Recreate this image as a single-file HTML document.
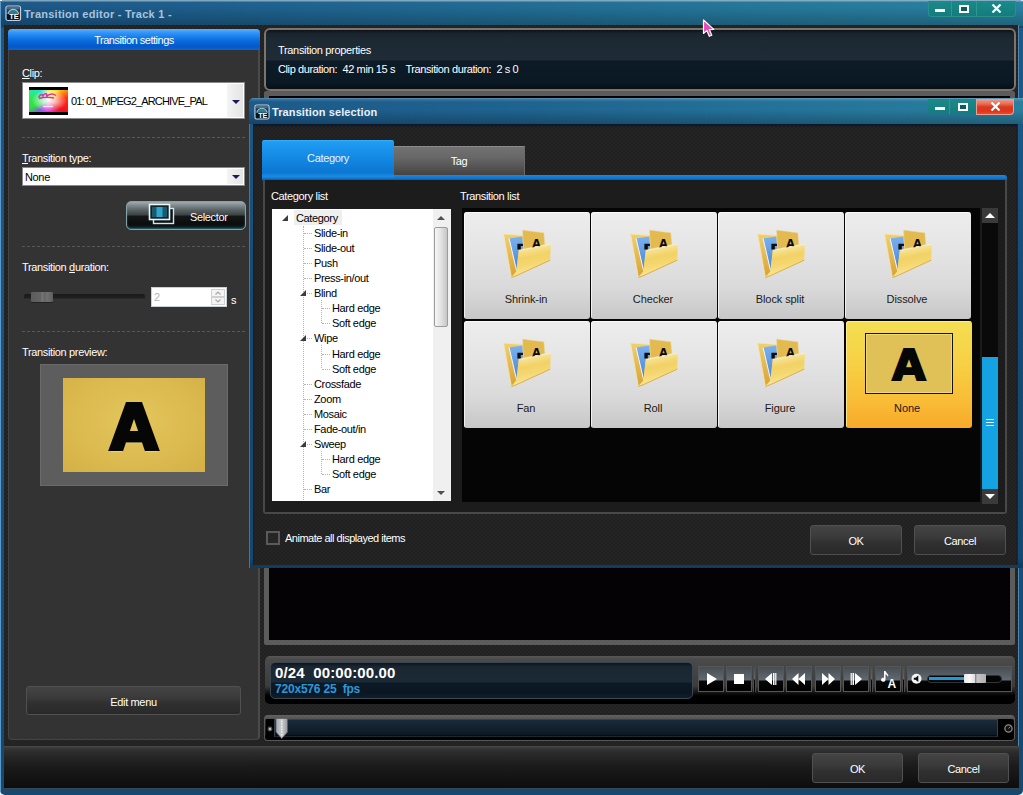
<!DOCTYPE html>
<html>
<head>
<meta charset="utf-8">
<title>Transition editor</title>
<style>
*{box-sizing:border-box;margin:0;padding:0}
html,body{width:1023px;height:795px;overflow:hidden;background:#e8eef2}
body{position:relative;font-family:"Liberation Sans","DejaVu Sans",sans-serif;font-size:11px;letter-spacing:-0.35px;color:#fff;line-height:13px}
.abs{position:absolute}
.t{position:absolute;white-space:pre}
u{text-decoration:underline}
/* main window */
#mainwin{left:0;top:0;width:1023px;height:795px;background:linear-gradient(180deg,#1c5a8a 0,#1a5482 300px,#164870 795px);border-radius:3px 3px 5px 5px}
#mtitle{left:0;top:0;width:1023px;height:26px;background:linear-gradient(90deg,#1b5686 0%,#1d5e8b 22%,#206a91 48%,#247698 75%,#287f9e 100%)}
#mtitle .sh{left:0;top:0;width:1023px;height:28px;background:linear-gradient(180deg,rgba(150,185,205,.8) 0,rgba(150,185,205,.8) 1px,rgba(255,255,255,.02) 2px,rgba(0,0,0,0) 8px,rgba(0,0,0,.22) 25px)}
.ttl{font-weight:bold;font-size:11px;letter-spacing:0.25px;color:#a9c3dc}
#client{left:4px;top:25px;width:1015px;height:722px;background:conic-gradient(#262626 25%,#212121 0 50%,#262626 0 75%,#212121 0) 0 0/4px 4px;border-right:1px solid #4f86b0}
#bottombar{left:4px;top:746px;width:1015px;height:43px;border-bottom:1px solid #3a4650;background:linear-gradient(180deg,#4a4a4a 0,#383838 2px,#2c2c2c 6px,#1c1c1c 45%,#0d0d0d 100%)}
.btn{position:absolute;height:30px;border:1px solid #505050;border-radius:3px;background:linear-gradient(180deg,#444 0,#3a3a3a 40%,#303030 60%,#292929 100%);text-align:center;line-height:30px;color:#fff}
/* left panel */
#lp{left:8px;top:29px;width:252px;height:711px;background:#333;border:1px solid #454545;border-right:2px solid #4a4a4a;border-radius:4px}
#lphead{left:8px;top:29px;width:252px;height:21px;border-radius:4px 4px 0 0;background:linear-gradient(180deg,#5ab0ff 0,#2f93f7 4px,#0b6fe0 11px,#0558c8 17px,#0b63d2 21px);text-align:center;line-height:23px}
.dash{position:absolute;height:0;border-top:1px dashed #585858}
.combo{position:absolute;background:#fff;border:1px solid #8a8a8a;color:#000}
.arrow{position:absolute;width:0;height:0;border-left:4px solid transparent;border-right:4px solid transparent;border-top:4px solid #1a1a5a}

/* right side */
#props{left:264px;top:28px;width:752px;height:63px;border:2px solid #7d746b;border-radius:6px;background:linear-gradient(180deg,#0c1218 0,#18222b 3px,#1d2932 8px,#1f2b35 30px,#0d1b27 31px,#0b1924 52px,#070f16 59px)}
#pv{left:264px;top:91px;width:751px;height:554px;background:#040204;border:5px solid #5c5c5c;border-radius:2px}
#player{left:265px;top:656px;width:750px;height:48px;border-radius:5px;background:linear-gradient(180deg,#585858 0,#4a4a4a 3px,#3c3c3c 30px,#111 37px,#000 40px)}
#disp{left:270px;top:662px;width:423px;height:37px;border:1px solid #3a4650;border-radius:5px;background:linear-gradient(180deg,#0d141b 0,#1a2732 4px,#1c2a36 19px,#0c1a27 20px,#0a1722 30px,#13222f 37px)}
.pb{position:absolute;top:666px;width:26px;height:26px;border:1px solid #565656;background:linear-gradient(180deg,#464c52 0,#626a71 13px,#070707 14px,#000 100%)}
.pbs{width:3px;border-width:0 1px;border-color:#4c4c4c}
.pb svg{position:absolute;left:0;top:0}
#seek{left:264px;top:715px;width:751px;height:26px;border-radius:4px;border:1px solid #585858;border-top:0;background:linear-gradient(180deg,#626262 0,#525252 4px,#1b2b3a 5px,#0c1824 20px,#000 21px,#000 26px)}

/* dialog */
#dlg{left:249px;top:98px;width:774px;height:470px;background:linear-gradient(180deg,#1c5a8a 0,#1a5482 60px,#164a74 200px,#154870 460px,#123c5e 467px,#123c5e 470px);border-radius:5px 0 0 0;border-left:1px solid #3a78a8}
#dtitle{left:249px;top:98px;width:774px;height:26px;border-radius:5px 0 0 0;background:linear-gradient(90deg,#1c5a8a 0%,#1f638f 35%,#24739a 70%,#2a7f9e 100%)}
#dtitle .sh{left:0;top:0;width:774px;height:26px;border-radius:5px 0 0 0;background:linear-gradient(180deg,rgba(150,190,215,.6) 0,rgba(150,190,215,.25) 1px,rgba(255,255,255,0) 4px,rgba(0,0,0,0) 12px,rgba(0,0,0,.25) 26px)}
#dbody{left:253px;top:124px;width:765px;height:441px;background:conic-gradient(#252525 25%,#202020 0 50%,#252525 0 75%,#202020 0) 0 0/4px 4px;border-right:1px solid #0d2a44;box-shadow:inset 0 2px 2px rgba(8,24,44,.85)}
#tabC{left:262px;top:140px;width:132px;height:38px;border-radius:2px 2px 0 0;color:#e4f4ff;background:linear-gradient(180deg,#38b0fc 0,#1f9cf2 2px,#1890ea 12px,#1084de 22px,#0c76d0 33px,#178ce6 36px,#1480d8 38px);text-align:center;line-height:36px}
#tabT{left:394px;top:146px;width:131px;height:29px;border-top:1px solid #8a8a8a;border-right:1px solid #6a6a6a;background:linear-gradient(180deg,#727272 0,#666 40%,#525252 75%,#484040 100%);text-align:center;line-height:28px}
#tabline{left:262px;top:175px;width:745px;height:6px;border-radius:2px 3px 0 0;background:linear-gradient(180deg,#1a8ae4 0,#106ec6 4px,#143a5c 6px)}
#inner{left:263px;top:180px;width:744px;height:334px;background:#1c1c1c;border:2px solid #484848;border-top:0;border-radius:0 0 3px 3px}
#tree{left:272px;top:209px;width:178.500px;height:292px;background:#fff;overflow:hidden;color:#000}
#tree .i{position:absolute;white-space:pre;line-height:13px;margin-top:1px}
#tree .h{position:absolute;height:0;border-top:1px dotted #b4b4b4}
#tree .v{position:absolute;width:0;border-left:1px dotted #b4b4b4}
#tree .a{position:absolute;width:0;height:0;border-left:6px solid transparent;border-bottom:6px solid #3c3c3c}
#list{left:462px;top:208px;width:518px;height:294px;background:#050505}
.tile{position:absolute;width:126px;height:107px;border-radius:3px;background:linear-gradient(180deg,#ededed 0,#e6e6e6 30%,#dadada 70%,#c7c7c7 100%);box-shadow:inset 1px 1px 0 rgba(255,255,255,.7);color:#1a1a1a;text-align:center}
.tile .lb{position:absolute;left:0;width:124px;top:81px;text-align:center;letter-spacing:-0.1px}
.tile svg{position:absolute;left:39px;top:17px}
.tile.sel{background:linear-gradient(180deg,#f4de52 0,#f7d044 40%,#f9bc36 75%,#f8a92a 100%);box-shadow:inset 1px 1px 0 rgba(255,240,160,.8)}
#vsb{left:982px;top:208px;width:16px;height:296px;background:#0a0a0a}
.sbb{position:absolute;left:0;width:16px;height:15px;background:#3a3a3a}
.cbx{position:absolute;width:14px;height:14px;border:2px solid #5a5a5a;background:#262626}
.wc{position:absolute;background:#16807f}

.gold{position:absolute;background:radial-gradient(ellipse at 50% 45%,#e3c65c 0,#dcbb50 55%,#d4b046 100%)}
.bigA{position:absolute;text-align:center;font-family:"DejaVu Sans","Liberation Sans",sans-serif;font-weight:bold;color:#060606;letter-spacing:0}
.ddb{position:absolute;background:linear-gradient(90deg,#f4f4f4,#e4e4e4)}
</style>
</head>
<body>
<div id="mainwin" class="abs">
  <div id="mtitle" class="abs"><div class="sh abs"></div></div>
  <div class="abs" style="left:0;top:2px;width:1px;height:790px;background:#5f98c4"></div>
  <div class="abs" style="left:0;top:0;width:2px;height:1px;background:#e8eef2"></div>
  <div class="abs" style="left:1021px;top:0;width:2px;height:1px;background:#d8e0e4"></div>
  <div id="client" class="abs"></div>
  <div id="bottombar" class="abs"></div>
  <div class="t ttl" style="left:24px;top:8px">Transition editor - Track 1 -</div>

  <!-- window controls -->
  <div class="wc" style="left:928px;top:1px;width:88px;height:16px;border-radius:0 0 4px 4px;background:linear-gradient(180deg,#1b8a88,#147c7e);border:1px solid #2a908c;border-top:0"></div>
  <div class="abs" style="left:951px;top:1px;width:1px;height:15px;background:#2f9792"></div>
  <div class="abs" style="left:976px;top:1px;width:1px;height:15px;background:#2f9792"></div>
  <div class="abs" style="left:935px;top:9px;width:10px;height:3px;background:#fff"></div>
  <div class="abs" style="left:959px;top:5px;width:10px;height:8px;border:2px solid #fff;background:#0f5c60"></div>
  <svg class="abs" style="left:991px;top:4px" width="11" height="9" viewBox="0 0 11 9"><path d="M1.500 0.500 L9.500 8.500 M9.500 0.500 L1.500 8.500" stroke="#fff" stroke-width="2.200"/></svg>
  <svg class="abs" style="left:5px;top:5px" width="16.5" height="16.5" viewBox="0 0 17 17"><rect x="1" y="1" width="15" height="15" rx="2" fill="#1f3850" stroke="#bdd1e4" stroke-width="1.2"/><rect x="2" y="2" width="13" height="2.500" fill="#4a6c86"/><path d="M3 10 A5.500 5.500 0 0 1 14 10 Z" fill="#2a7c8c" stroke="#a8c8dc" stroke-width="1.1"/><rect x="2" y="9.300" width="13" height="5.700" fill="#06121e"/><text x="9.200" y="14.500" text-anchor="middle" font-family="Liberation Sans, sans-serif" font-weight="bold" font-size="7.800" fill="#fff" letter-spacing="-0.2">TE</text></svg>
  <svg class="abs" style="left:702px;top:19px;z-index:5" width="16" height="20" viewBox="0 0 16 20"><path d="M1.500 1 L1.500 14.500 L4.800 11.600 L7.300 17.300 L9.800 16.200 L7.300 10.600 L11.800 10.400 Z" fill="#e84ab8" stroke="#fff" stroke-width="1.2" stroke-linejoin="round"/></svg>
  <!-- left panel -->
  <div id="lp" class="abs"></div>
  <div id="lphead" class="abs" style="letter-spacing:-0.49px">Transition settings</div>
  <div class="t" style="left:22px;top:67px"><u>C</u>lip:</div>
  <div class="combo" style="left:22px;top:82px;width:223px;height:37px"></div>
  <div class="t" style="left:71px;top:95px;color:#000;letter-spacing:-0.85px">01: 01_MPEG2_ARCHIVE_PAL</div>
  <div class="abs" style="left:29px;top:87px;width:39px;height:28px;background:#000"></div>
  <div class="abs" style="left:29px;top:90px;width:39px;height:22px;background:radial-gradient(ellipse 45% 50% at 52% 48%,rgba(255,255,255,.95) 0,rgba(255,255,255,.7) 35%,rgba(255,255,255,0) 100%),conic-gradient(from 0deg at 50% 50%,#f8f060 0deg,#ffe020 40deg,#ff3010 80deg,#f01020 125deg,#f030c0 165deg,#e040f0 195deg,#8060e0 225deg,#30e040 250deg,#30e860 285deg,#20e8d8 320deg,#a0f0a0 345deg,#f8f060 360deg)"></div>
  <svg class="abs" style="left:29px;top:87px" width="39" height="29" viewBox="0 0 39 29"><path d="M9.500 10.500 C11.500 6.500 14 7 13.500 9.500 C15.500 5.500 19 6 17.500 9.500 C20 7 23.500 6 27 8.500 M10 11.500 C15 10 20 10 25 11" stroke="#e0309a" stroke-width="1.5" fill="none"/><path d="M14 19.500h10" stroke="#fbe4f4" stroke-width="1.2"/></svg>
  <div class="ddb" style="left:227px;top:84px;width:16px;height:33px"></div>
  <div class="arrow" style="left:232px;top:100px"></div>
  <div class="dash" style="left:22px;top:137px;width:223px"></div>
  <div class="t" style="left:22px;top:152px"><u>T</u>ransition type:</div>
  <div class="combo" style="left:22px;top:167px;width:223px;height:19px"></div>
  <div class="t" style="left:25px;top:171px;color:#000">None</div>
  <div class="ddb" style="left:227px;top:169px;width:16px;height:15px"></div>
  <div class="arrow" style="left:232px;top:175px"></div>
  <div class="dash" style="left:22px;top:246px;width:223px"></div>
  <div class="t" style="left:22px;top:261px">Transition <u>d</u>uration:</div>
  <div class="dash" style="left:22px;top:331px;width:223px"></div>
  <div class="t" style="left:22px;top:346px">Transition preview:</div>
  <!-- selector button -->
  <div class="abs" style="left:126px;top:201px;width:120px;height:29px;border:1px solid #86a2a8;border-radius:5px;background:linear-gradient(180deg,#a2acae 0,#848e90 3px,#5a6264 8px,#3c4244 13px,#151717 14px,#0c0c0c 22px,#10282e 29px);box-shadow:inset 0 -1px 2px rgba(60,170,190,.55)"></div>
  <svg class="abs" style="left:146px;top:202px" width="32" height="26" viewBox="0 0 32 26"><rect x="7.500" y="6.500" width="20" height="15" fill="#0a1418" stroke="#cfe6ea" stroke-width="1.4"/><rect x="3.500" y="2.500" width="20" height="15" fill="#10222a" stroke="#e8f6f8" stroke-width="1.6"/><rect x="6" y="5" width="15" height="10" fill="#1a5a6e"/><rect x="10.500" y="5" width="6" height="10" fill="#2fa4cc"/></svg>
  <div class="t" style="left:190px;top:211px">Selector</div>
  <!-- slider -->
  <div class="abs" style="left:24px;top:294px;width:121px;height:6px;border-radius:2px;background:linear-gradient(180deg,#1a1a1a,#202020 65%,#3c3c3c 100%)"></div>
  <div class="abs" style="left:31px;top:292px;width:22px;height:10px;border-radius:1px;background:linear-gradient(90deg,#5c5c5c 0,#646464 45%,#787878 50%,#666 60%,#707070 75%,#5e5e5e 100%);box-shadow:0 1px 0 #222"></div>
  <div class="abs" style="left:151px;top:287px;width:76px;height:20px;background:#fff;border:1px solid #c8d0d8"></div>
  <div class="t" style="left:154px;top:291px;color:#b4b4b4">2</div>
  <div class="abs" style="left:211px;top:289px;width:14px;height:8px;border:1px solid #d0d0d0;background:#f4f4f4"></div>
  <div class="abs" style="left:211px;top:297px;width:14px;height:8px;border:1px solid #d0d0d0;background:#f4f4f4"></div>
  <svg class="abs" style="left:211px;top:289px" width="14" height="16" viewBox="0 0 14 16"><path d="M4.500 5.500 L7 3 L9.500 5.500 M4.500 10.500 L7 13 L9.500 10.500" stroke="#a8a8a8" stroke-width="1.2" fill="none"/></svg>
  <div class="t" style="left:231px;top:294px">s</div>
  <!-- preview -->
  <div class="abs" style="left:40px;top:364px;width:188px;height:122px;background:#5d5d5d;border:1px solid #6a6a6a"></div>
  <div class="gold" style="left:63px;top:378px;width:142px;height:94px"></div>
  <div class="bigA" style="left:63px;top:378px;width:142px;height:94px;font-size:62px;line-height:100px;-webkit-text-stroke:3px #060606;text-shadow:0 2px 1px rgba(255,240,170,.8)">A</div>
  <div class="btn" style="left:26px;top:686px;width:215px;height:29px">Edit menu</div>


  <!-- right side -->
  <div id="props" class="abs"></div>
  <div class="t" style="left:278px;top:44px;letter-spacing:-0.33px">Transition properties</div>
  <div class="t" style="left:278px;top:63px;letter-spacing:-0.4px">Clip duration:  42 min 15 s    Transition duration:  2 s 0</div>
  <div id="pv" class="abs"></div>
  <div id="player" class="abs"></div>
  <div id="disp" class="abs"></div>
  <div class="t" style="left:275px;top:664px;font-size:15px;font-weight:bold;letter-spacing:0.12px;line-height:17px">0/24  00:00:00.00</div>
  <div class="t" style="left:275px;top:682px;font-size:12px;font-weight:bold;letter-spacing:-0.2px;line-height:14px;color:#2b98dc">720x576 25  fps</div>
  <div class="pb" style="left:698px"><svg width="24" height="24" viewBox="0 0 24 24"><path d="M8 6 L18 12 L8 18 Z" fill="#fff"/></svg></div>
  <div class="pb" style="left:726px"><svg width="24" height="24" viewBox="0 0 24 24"><rect x="7" y="7" width="10" height="10" fill="#fff"/></svg></div>
  <div class="pb" style="left:758px"><svg width="24" height="24" viewBox="0 0 24 24"><path d="M13 6 L13 18 L6 12 Z M14 6h1.5v12H14z M16.2 6h1.2v12h-1.2z" fill="#fff"/></svg></div>
  <div class="pb" style="left:786px"><svg width="24" height="24" viewBox="0 0 24 24"><path d="M11.5 6 L11.5 18 L5 12 Z M18 6 L18 18 L11.5 12 Z" fill="#fff"/></svg></div>
  <div class="pb" style="left:815px"><svg width="24" height="24" viewBox="0 0 24 24"><path d="M6 6 L12.5 12 L6 18 Z M12.5 6 L19 12 L12.5 18 Z" fill="#fff"/></svg></div>
  <div class="pb" style="left:843px"><svg width="24" height="24" viewBox="0 0 24 24"><path d="M11 6 L18 12 L11 18 Z M8.5 6h1.5v12H8.500z M6.600 6h1.2v12h-1.2z" fill="#fff"/></svg></div>
  <div class="pb" style="left:875px"><svg width="24" height="24" viewBox="0 0 24 24"><path d="M8 4 L9.5 4 C10 6 12 6.500 12.5 9 L11.5 9.5 C11 8 10 7.500 9.500 7.300 L9.500 12.500 A2.200 2 0 1 1 8 10.800 Z" fill="#fff"/><text x="11.5" y="21" font-family="Liberation Sans, sans-serif" font-weight="bold" font-size="12" fill="#fff" letter-spacing="0">A</text></svg></div>
  <div class="pb pbs" style="left:753px"></div>
  <div class="pb pbs" style="left:870px"></div>
  <div class="pb pbs" style="left:902px"></div>
  <div class="pb" style="left:907px;width:105px"></div>
  <svg class="abs" style="left:910px;top:672px" width="14" height="14" viewBox="0 0 14 14"><circle cx="6.500" cy="6.800" r="5" fill="#f4f4f4"/><path d="M3.800 5.800 h1.700 l2.800 -2.300 v6.600 l-2.800 -2.300 h-1.700z" fill="#0a0a0a"/></svg>
  <div class="abs" style="left:927px;top:675px;width:75px;height:8px;border-radius:4px;background:#050505;border:1px solid #303436"></div>
  <div class="abs" style="left:929px;top:677px;width:38px;height:3px;background:#1e9ada"></div>
  <div class="abs" style="left:964px;top:674px;width:22px;height:9px;border-radius:1px;background:linear-gradient(90deg,#e8e8e8 0,#fafafa 25%,#e0e0e0 48%,#8a8a8a 52%,#c4c4c4 60%,#b0b0b0 100%)"></div>
  <div id="seek" class="abs"></div>
  <div class="abs" style="left:266px;top:719px;width:8px;height:18px;background:#000"></div>
  <div class="abs" style="left:998px;top:719px;width:16px;height:18px;background:#000;border-radius:0 3px 3px 0"></div>
  <div class="abs" style="left:274px;top:719px;width:724px;height:18px;border:1px solid #33424f;border-bottom-color:#1d2830"></div>
  <svg class="abs" style="left:1003px;top:723px" width="11" height="11" viewBox="0 0 11 11"><circle cx="5.500" cy="5.500" r="3.600" fill="#111" stroke="#8a8a8a" stroke-width="1.3"/><path d="M5.500 5.500 L7.500 3.500" stroke="#8a8a8a" stroke-width="1"/></svg>
  <svg class="abs" style="left:266px;top:724px" width="8" height="9" viewBox="0 0 8 9"><circle cx="4" cy="5" r="1.800" fill="#bbb" stroke="#555" stroke-width="1.2"/></svg>
  <svg class="abs" style="left:274.500px;top:717.500px" width="13.500" height="21.500" viewBox="0 0 14 23" preserveAspectRatio="none"><defs><linearGradient id="skt" x1="0" y1="0" x2="1" y2="0"><stop offset="0" stop-color="#a4a6a8"/><stop offset="0.5" stop-color="#cbcdcf"/><stop offset="1" stop-color="#96989a"/></linearGradient></defs><path d="M1 1.500 Q1 0.500 2 0.500 L12 0.500 Q13 0.500 13 1.500 L13 15 L7 22 L1 15 Z" fill="url(#skt)" stroke="#5a5e62" stroke-width="0.8"/><path d="M7 3 V19" stroke="#f0f0f0" stroke-width="1.6" stroke-dasharray="1.5 1.3"/></svg>
  <!-- bottom buttons -->
  <div class="btn" style="left:812px;top:753px;width:91px">OK</div>
  <div class="btn" style="left:918px;top:753px;width:91px">Cancel</div>

  <!-- dialog -->
  <div id="dlg" class="abs"></div>
  <div id="dtitle" class="abs"><div class="sh abs"></div></div>
  <div id="dbody" class="abs"></div>
  <div class="t ttl" style="left:272px;top:106px;color:#e8f0f8;letter-spacing:0.1px">Transition selection</div>
  <div class="wc" style="left:928px;top:99px;width:48px;height:15px;border-radius:0 0 0 4px;background:linear-gradient(180deg,#1b8a88,#147c7e)"></div>
  <div class="abs" style="left:976px;top:99px;width:38px;height:16px;border-radius:0 0 4px 0;border:1px solid #e8a090;border-top:0;background:linear-gradient(180deg,#f0a090 0,#e86a50 5px,#d83a20 8px,#e0341c 12px,#f05030 16px)"></div>
  <div class="abs" style="left:949px;top:99px;width:1px;height:15px;background:#2f9792"></div>
  <div class="abs" style="left:935px;top:107px;width:10px;height:3px;background:#fff"></div>
  <div class="abs" style="left:958px;top:103px;width:10px;height:8px;border:2px solid #fff;background:#0f5c60"></div>
  <svg class="abs" style="left:990px;top:102px" width="11" height="9" viewBox="0 0 11 9"><path d="M1.500 0.500 L9.500 8.500 M9.500 0.500 L1.500 8.500" stroke="#fff" stroke-width="2.200"/></svg>
  <svg class="abs" style="left:254px;top:103.500px" width="16" height="16" viewBox="0 0 17 17"><rect x="1" y="1" width="15" height="15" rx="2" fill="#1f3850" stroke="#bdd1e4" stroke-width="1.2"/><rect x="2" y="2" width="13" height="2.500" fill="#4a6c86"/><path d="M3 10 A5.500 5.500 0 0 1 14 10 Z" fill="#2a7c8c" stroke="#a8c8dc" stroke-width="1.1"/><rect x="2" y="9.300" width="13" height="5.700" fill="#06121e"/><text x="9.200" y="14.500" text-anchor="middle" font-family="Liberation Sans, sans-serif" font-weight="bold" font-size="7.800" fill="#fff" letter-spacing="-0.2">TE</text></svg>
  <div id="tabT" class="abs">Tag</div>
  <div id="tabline" class="abs"></div>
  <div id="inner" class="abs"></div>
  <div id="tabC" class="abs">Category</div>
  <div class="t" style="left:271px;top:190px">Category list</div>
  <div class="t" style="left:460px;top:190px">Transition list</div>
  <div id="tree" class="abs"><div class="abs" style="left:22px;top:1px;width:48px;height:15px;background:#efefef"></div><div class="v" style="left:31px;top:17px;height:280px"></div><div class="i" style="left:24px;top:2px">Category</div><div class="a" style="left:10px;top:6px"></div><div class="i" style="left:42px;top:17px">Slide-in</div><div class="h" style="left:32px;top:24px;width:8px"></div><div class="i" style="left:42px;top:32px">Slide-out</div><div class="h" style="left:32px;top:39px;width:8px"></div><div class="i" style="left:42px;top:47px">Push</div><div class="h" style="left:32px;top:54px;width:8px"></div><div class="i" style="left:42px;top:62px">Press-in/out</div><div class="h" style="left:32px;top:69px;width:8px"></div><div class="i" style="left:42px;top:77px">Blind</div><div class="h" style="left:32px;top:84px;width:8px"></div><div class="a" style="left:28px;top:81px"></div><div class="i" style="left:60px;top:92px">Hard edge</div><div class="h" style="left:50px;top:99px;width:8px"></div><div class="i" style="left:60px;top:107px">Soft edge</div><div class="h" style="left:50px;top:114px;width:8px"></div><div class="i" style="left:42px;top:122px">Wipe</div><div class="h" style="left:32px;top:129px;width:8px"></div><div class="a" style="left:28px;top:126px"></div><div class="i" style="left:60px;top:138px">Hard edge</div><div class="h" style="left:50px;top:145px;width:8px"></div><div class="i" style="left:60px;top:153px">Soft edge</div><div class="h" style="left:50px;top:160px;width:8px"></div><div class="i" style="left:42px;top:168px">Crossfade</div><div class="h" style="left:32px;top:175px;width:8px"></div><div class="i" style="left:42px;top:183px">Zoom</div><div class="h" style="left:32px;top:190px;width:8px"></div><div class="i" style="left:42px;top:198px">Mosaic</div><div class="h" style="left:32px;top:205px;width:8px"></div><div class="i" style="left:42px;top:213px">Fade-out/in</div><div class="h" style="left:32px;top:220px;width:8px"></div><div class="i" style="left:42px;top:228px">Sweep</div><div class="h" style="left:32px;top:235px;width:8px"></div><div class="a" style="left:28px;top:232px"></div><div class="i" style="left:60px;top:243px">Hard edge</div><div class="h" style="left:50px;top:250px;width:8px"></div><div class="i" style="left:60px;top:258px">Soft edge</div><div class="h" style="left:50px;top:265px;width:8px"></div><div class="i" style="left:42px;top:273px">Bar</div><div class="h" style="left:32px;top:280px;width:8px"></div><div class="v" style="left:49px;top:91px;height:23px"></div><div class="v" style="left:49px;top:136px;height:23px"></div><div class="v" style="left:49px;top:242px;height:23px"></div><div class="abs" style="left:161px;top:0;width:18px;height:292px;background:#f0f0f0"></div><div class="abs" style="left:162px;top:18px;width:14px;height:100px;border:1px solid #9c9c9c;border-radius:2px;background:linear-gradient(90deg,#f6f6f6 0,#e2e2e2 50%,#c6c6c6 100%)"></div><div class="abs" style="left:165px;top:7px;width:0;height:0;border-left:4px solid transparent;border-right:4px solid transparent;border-bottom:4px solid #505050"></div><div class="abs" style="left:165px;top:282px;width:0;height:0;border-left:4px solid transparent;border-right:4px solid transparent;border-top:4px solid #505050"></div></div>
  <div id="list" class="abs">
<div class="tile" style="left:2px;top:4px"><svg width="50" height="50" viewBox="0 0 50 50"><defs><linearGradient id="fgF0" x1="0.2" y1="0" x2="0.45" y2="1"><stop offset="0" stop-color="#fdf0b8"/><stop offset="0.42" stop-color="#f2d266"/><stop offset="0.62" stop-color="#f4d770"/><stop offset="0.85" stop-color="#f9e391"/><stop offset="1" stop-color="#e6bb4e"/></linearGradient><linearGradient id="fgB0" x1="0" y1="0" x2="0" y2="1"><stop offset="0" stop-color="#efd070"/><stop offset="1" stop-color="#d8a233"/></linearGradient><linearGradient id="fgU0" x1="0" y1="0" x2="0" y2="1"><stop offset="0" stop-color="#7ab2f2"/><stop offset="1" stop-color="#4784d2"/></linearGradient></defs><path d="M0.600 5.100 L20 6.500 L20 23 L13.500 43 L8.400 48.400 Z" fill="url(#fgB0)" stroke="#f6e6a8" stroke-width="0.8"/><path d="M6.100 9.400 L19.400 7.400 L20.100 19.500 L15.800 21.100 L13.500 41.400 Z" fill="url(#fgU0)"/><path d="M6.100 9.400 L13.500 41.400" stroke="#f4f8fd" stroke-width="1"/><path d="M14.400 14.800 h5.600 v2.200 h-2.200 v3.400 h-3.400z" fill="#0c0c0c"/><path d="M19.700 1.200 L40.800 3.900 L41.700 15.600 L20.500 19.900 Z" fill="#e3ba4f" stroke="#edcf7c" stroke-width="0.5"/><text x="33.300" y="18.600" text-anchor="middle" font-family="DejaVu Sans, Liberation Sans, sans-serif" font-weight="bold" font-size="11.5" fill="#0a0a0a">A</text><path d="M15.800 21.500 L47.800 15.200 L47.200 31.200 L13.100 46.800 L8.400 48.500 L13.100 42.900 Z" fill="url(#fgF0)"/><path d="M47.200 31.200 L13.100 46.800 L8.400 48.500" stroke="#d9a83e" stroke-width="0.9" fill="none"/><path d="M15.800 21.500 L47.800 15.200" stroke="#fdf4cc" stroke-width="0.7" fill="none"/></svg><div class="lb">Shrink-in</div></div>
<div class="tile" style="left:129px;top:4px"><svg width="50" height="50" viewBox="0 0 50 50"><defs><linearGradient id="fgF1" x1="0.2" y1="0" x2="0.45" y2="1"><stop offset="0" stop-color="#fdf0b8"/><stop offset="0.42" stop-color="#f2d266"/><stop offset="0.62" stop-color="#f4d770"/><stop offset="0.85" stop-color="#f9e391"/><stop offset="1" stop-color="#e6bb4e"/></linearGradient><linearGradient id="fgB1" x1="0" y1="0" x2="0" y2="1"><stop offset="0" stop-color="#efd070"/><stop offset="1" stop-color="#d8a233"/></linearGradient><linearGradient id="fgU1" x1="0" y1="0" x2="0" y2="1"><stop offset="0" stop-color="#7ab2f2"/><stop offset="1" stop-color="#4784d2"/></linearGradient></defs><path d="M0.600 5.100 L20 6.500 L20 23 L13.500 43 L8.400 48.400 Z" fill="url(#fgB1)" stroke="#f6e6a8" stroke-width="0.8"/><path d="M6.100 9.400 L19.400 7.400 L20.100 19.500 L15.800 21.100 L13.500 41.400 Z" fill="url(#fgU1)"/><path d="M6.100 9.400 L13.500 41.400" stroke="#f4f8fd" stroke-width="1"/><path d="M14.400 14.800 h5.600 v2.200 h-2.200 v3.400 h-3.400z" fill="#0c0c0c"/><path d="M19.700 1.200 L40.800 3.900 L41.700 15.600 L20.500 19.900 Z" fill="#e3ba4f" stroke="#edcf7c" stroke-width="0.5"/><text x="33.300" y="18.600" text-anchor="middle" font-family="DejaVu Sans, Liberation Sans, sans-serif" font-weight="bold" font-size="11.5" fill="#0a0a0a">A</text><path d="M15.800 21.500 L47.800 15.200 L47.200 31.200 L13.100 46.800 L8.400 48.500 L13.100 42.900 Z" fill="url(#fgF1)"/><path d="M47.200 31.200 L13.100 46.800 L8.400 48.500" stroke="#d9a83e" stroke-width="0.9" fill="none"/><path d="M15.800 21.500 L47.800 15.200" stroke="#fdf4cc" stroke-width="0.7" fill="none"/></svg><div class="lb">Checker</div></div>
<div class="tile" style="left:256px;top:4px"><svg width="50" height="50" viewBox="0 0 50 50"><defs><linearGradient id="fgF2" x1="0.2" y1="0" x2="0.45" y2="1"><stop offset="0" stop-color="#fdf0b8"/><stop offset="0.42" stop-color="#f2d266"/><stop offset="0.62" stop-color="#f4d770"/><stop offset="0.85" stop-color="#f9e391"/><stop offset="1" stop-color="#e6bb4e"/></linearGradient><linearGradient id="fgB2" x1="0" y1="0" x2="0" y2="1"><stop offset="0" stop-color="#efd070"/><stop offset="1" stop-color="#d8a233"/></linearGradient><linearGradient id="fgU2" x1="0" y1="0" x2="0" y2="1"><stop offset="0" stop-color="#7ab2f2"/><stop offset="1" stop-color="#4784d2"/></linearGradient></defs><path d="M0.600 5.100 L20 6.500 L20 23 L13.500 43 L8.400 48.400 Z" fill="url(#fgB2)" stroke="#f6e6a8" stroke-width="0.8"/><path d="M6.100 9.400 L19.400 7.400 L20.100 19.500 L15.800 21.100 L13.500 41.400 Z" fill="url(#fgU2)"/><path d="M6.100 9.400 L13.500 41.400" stroke="#f4f8fd" stroke-width="1"/><path d="M14.400 14.800 h5.600 v2.200 h-2.200 v3.400 h-3.400z" fill="#0c0c0c"/><path d="M19.700 1.200 L40.800 3.900 L41.700 15.600 L20.500 19.900 Z" fill="#e3ba4f" stroke="#edcf7c" stroke-width="0.5"/><text x="33.300" y="18.600" text-anchor="middle" font-family="DejaVu Sans, Liberation Sans, sans-serif" font-weight="bold" font-size="11.5" fill="#0a0a0a">A</text><path d="M15.800 21.500 L47.800 15.200 L47.200 31.200 L13.100 46.800 L8.400 48.500 L13.100 42.900 Z" fill="url(#fgF2)"/><path d="M47.200 31.200 L13.100 46.800 L8.400 48.500" stroke="#d9a83e" stroke-width="0.9" fill="none"/><path d="M15.800 21.500 L47.800 15.200" stroke="#fdf4cc" stroke-width="0.7" fill="none"/></svg><div class="lb">Block split</div></div>
<div class="tile" style="left:383px;top:4px"><svg width="50" height="50" viewBox="0 0 50 50"><defs><linearGradient id="fgF3" x1="0.2" y1="0" x2="0.45" y2="1"><stop offset="0" stop-color="#fdf0b8"/><stop offset="0.42" stop-color="#f2d266"/><stop offset="0.62" stop-color="#f4d770"/><stop offset="0.85" stop-color="#f9e391"/><stop offset="1" stop-color="#e6bb4e"/></linearGradient><linearGradient id="fgB3" x1="0" y1="0" x2="0" y2="1"><stop offset="0" stop-color="#efd070"/><stop offset="1" stop-color="#d8a233"/></linearGradient><linearGradient id="fgU3" x1="0" y1="0" x2="0" y2="1"><stop offset="0" stop-color="#7ab2f2"/><stop offset="1" stop-color="#4784d2"/></linearGradient></defs><path d="M0.600 5.100 L20 6.500 L20 23 L13.500 43 L8.400 48.400 Z" fill="url(#fgB3)" stroke="#f6e6a8" stroke-width="0.8"/><path d="M6.100 9.400 L19.400 7.400 L20.100 19.500 L15.800 21.100 L13.500 41.400 Z" fill="url(#fgU3)"/><path d="M6.100 9.400 L13.500 41.400" stroke="#f4f8fd" stroke-width="1"/><path d="M14.400 14.800 h5.600 v2.200 h-2.200 v3.400 h-3.400z" fill="#0c0c0c"/><path d="M19.700 1.200 L40.800 3.900 L41.700 15.600 L20.500 19.900 Z" fill="#e3ba4f" stroke="#edcf7c" stroke-width="0.5"/><text x="33.300" y="18.600" text-anchor="middle" font-family="DejaVu Sans, Liberation Sans, sans-serif" font-weight="bold" font-size="11.5" fill="#0a0a0a">A</text><path d="M15.800 21.500 L47.800 15.200 L47.200 31.200 L13.100 46.800 L8.400 48.500 L13.100 42.900 Z" fill="url(#fgF3)"/><path d="M47.200 31.200 L13.100 46.800 L8.400 48.500" stroke="#d9a83e" stroke-width="0.9" fill="none"/><path d="M15.800 21.500 L47.800 15.200" stroke="#fdf4cc" stroke-width="0.7" fill="none"/></svg><div class="lb">Dissolve</div></div>
<div class="tile" style="left:2px;top:113px"><svg width="50" height="50" viewBox="0 0 50 50"><defs><linearGradient id="fgF4" x1="0.2" y1="0" x2="0.45" y2="1"><stop offset="0" stop-color="#fdf0b8"/><stop offset="0.42" stop-color="#f2d266"/><stop offset="0.62" stop-color="#f4d770"/><stop offset="0.85" stop-color="#f9e391"/><stop offset="1" stop-color="#e6bb4e"/></linearGradient><linearGradient id="fgB4" x1="0" y1="0" x2="0" y2="1"><stop offset="0" stop-color="#efd070"/><stop offset="1" stop-color="#d8a233"/></linearGradient><linearGradient id="fgU4" x1="0" y1="0" x2="0" y2="1"><stop offset="0" stop-color="#7ab2f2"/><stop offset="1" stop-color="#4784d2"/></linearGradient></defs><path d="M0.600 5.100 L20 6.500 L20 23 L13.500 43 L8.400 48.400 Z" fill="url(#fgB4)" stroke="#f6e6a8" stroke-width="0.8"/><path d="M6.100 9.400 L19.400 7.400 L20.100 19.500 L15.800 21.100 L13.500 41.400 Z" fill="url(#fgU4)"/><path d="M6.100 9.400 L13.500 41.400" stroke="#f4f8fd" stroke-width="1"/><path d="M14.400 14.800 h5.600 v2.200 h-2.200 v3.400 h-3.400z" fill="#0c0c0c"/><path d="M19.700 1.200 L40.800 3.900 L41.700 15.600 L20.500 19.900 Z" fill="#e3ba4f" stroke="#edcf7c" stroke-width="0.5"/><text x="33.300" y="18.600" text-anchor="middle" font-family="DejaVu Sans, Liberation Sans, sans-serif" font-weight="bold" font-size="11.5" fill="#0a0a0a">A</text><path d="M15.800 21.500 L47.800 15.200 L47.200 31.200 L13.100 46.800 L8.400 48.500 L13.100 42.900 Z" fill="url(#fgF4)"/><path d="M47.200 31.200 L13.100 46.800 L8.400 48.500" stroke="#d9a83e" stroke-width="0.9" fill="none"/><path d="M15.800 21.500 L47.800 15.200" stroke="#fdf4cc" stroke-width="0.7" fill="none"/></svg><div class="lb">Fan</div></div>
<div class="tile" style="left:129px;top:113px"><svg width="50" height="50" viewBox="0 0 50 50"><defs><linearGradient id="fgF5" x1="0.2" y1="0" x2="0.45" y2="1"><stop offset="0" stop-color="#fdf0b8"/><stop offset="0.42" stop-color="#f2d266"/><stop offset="0.62" stop-color="#f4d770"/><stop offset="0.85" stop-color="#f9e391"/><stop offset="1" stop-color="#e6bb4e"/></linearGradient><linearGradient id="fgB5" x1="0" y1="0" x2="0" y2="1"><stop offset="0" stop-color="#efd070"/><stop offset="1" stop-color="#d8a233"/></linearGradient><linearGradient id="fgU5" x1="0" y1="0" x2="0" y2="1"><stop offset="0" stop-color="#7ab2f2"/><stop offset="1" stop-color="#4784d2"/></linearGradient></defs><path d="M0.600 5.100 L20 6.500 L20 23 L13.500 43 L8.400 48.400 Z" fill="url(#fgB5)" stroke="#f6e6a8" stroke-width="0.8"/><path d="M6.100 9.400 L19.400 7.400 L20.100 19.500 L15.800 21.100 L13.500 41.400 Z" fill="url(#fgU5)"/><path d="M6.100 9.400 L13.500 41.400" stroke="#f4f8fd" stroke-width="1"/><path d="M14.400 14.800 h5.600 v2.200 h-2.200 v3.400 h-3.400z" fill="#0c0c0c"/><path d="M19.700 1.200 L40.800 3.900 L41.700 15.600 L20.500 19.900 Z" fill="#e3ba4f" stroke="#edcf7c" stroke-width="0.5"/><text x="33.300" y="18.600" text-anchor="middle" font-family="DejaVu Sans, Liberation Sans, sans-serif" font-weight="bold" font-size="11.5" fill="#0a0a0a">A</text><path d="M15.800 21.500 L47.800 15.200 L47.200 31.200 L13.100 46.800 L8.400 48.500 L13.100 42.900 Z" fill="url(#fgF5)"/><path d="M47.200 31.200 L13.100 46.800 L8.400 48.500" stroke="#d9a83e" stroke-width="0.9" fill="none"/><path d="M15.800 21.500 L47.800 15.200" stroke="#fdf4cc" stroke-width="0.7" fill="none"/></svg><div class="lb">Roll</div></div>
<div class="tile" style="left:256px;top:113px"><svg width="50" height="50" viewBox="0 0 50 50"><defs><linearGradient id="fgF6" x1="0.2" y1="0" x2="0.45" y2="1"><stop offset="0" stop-color="#fdf0b8"/><stop offset="0.42" stop-color="#f2d266"/><stop offset="0.62" stop-color="#f4d770"/><stop offset="0.85" stop-color="#f9e391"/><stop offset="1" stop-color="#e6bb4e"/></linearGradient><linearGradient id="fgB6" x1="0" y1="0" x2="0" y2="1"><stop offset="0" stop-color="#efd070"/><stop offset="1" stop-color="#d8a233"/></linearGradient><linearGradient id="fgU6" x1="0" y1="0" x2="0" y2="1"><stop offset="0" stop-color="#7ab2f2"/><stop offset="1" stop-color="#4784d2"/></linearGradient></defs><path d="M0.600 5.100 L20 6.500 L20 23 L13.500 43 L8.400 48.400 Z" fill="url(#fgB6)" stroke="#f6e6a8" stroke-width="0.8"/><path d="M6.100 9.400 L19.400 7.400 L20.100 19.500 L15.800 21.100 L13.500 41.400 Z" fill="url(#fgU6)"/><path d="M6.100 9.400 L13.500 41.400" stroke="#f4f8fd" stroke-width="1"/><path d="M14.400 14.800 h5.600 v2.200 h-2.200 v3.400 h-3.400z" fill="#0c0c0c"/><path d="M19.700 1.200 L40.800 3.900 L41.700 15.600 L20.500 19.900 Z" fill="#e3ba4f" stroke="#edcf7c" stroke-width="0.5"/><text x="33.300" y="18.600" text-anchor="middle" font-family="DejaVu Sans, Liberation Sans, sans-serif" font-weight="bold" font-size="11.5" fill="#0a0a0a">A</text><path d="M15.800 21.500 L47.800 15.200 L47.200 31.200 L13.100 46.800 L8.400 48.500 L13.100 42.900 Z" fill="url(#fgF6)"/><path d="M47.200 31.200 L13.100 46.800 L8.400 48.500" stroke="#d9a83e" stroke-width="0.9" fill="none"/><path d="M15.800 21.500 L47.800 15.200" stroke="#fdf4cc" stroke-width="0.7" fill="none"/></svg><div class="lb">Figure</div></div>
<div class="tile sel" style="left:384px;top:113px"><div class="abs" style="left:19px;top:12px;width:88px;height:61px;border:1px solid #171206;background:#dfc158;box-shadow:inset 0 0 0 1px rgba(250,235,150,.55)"></div><div class="bigA" style="left:19px;top:12px;width:88px;height:61px;font-size:43px;line-height:64px;-webkit-text-stroke:2px #060606;text-shadow:0 1px 1px rgba(255,240,170,.8)">A</div><div class="lb" style="left:-1px">None</div></div>
  </div>
  <div id="vsb" class="abs"><div class="sbb" style="top:0"></div><div class="sbb" style="top:281px"></div><div class="abs" style="left:0;top:149px;width:16px;height:132px;background:#14a2e2"></div><div class="abs" style="left:3px;top:5px;width:0;height:0;border-left:5px solid transparent;border-right:5px solid transparent;border-bottom:5px solid #fff"></div><div class="abs" style="left:3px;top:286px;width:0;height:0;border-left:5px solid transparent;border-right:5px solid transparent;border-top:5px solid #fff"></div><div class="abs" style="left:4px;top:211px;width:8px;height:1px;background:#d8f0fa;box-shadow:0 3px 0 #d8f0fa,0 6px 0 #d8f0fa"></div></div>
  <div class="cbx" style="left:266px;top:531px"></div>
  <div class="t" style="left:285px;top:532px;letter-spacing:-0.49px">Animate all displayed items</div>
  <div class="btn" style="left:810px;top:525px;width:92px">OK</div>
  <div class="btn" style="left:914px;top:525px;width:92px">Cancel</div>
</div>
</body>
</html>
